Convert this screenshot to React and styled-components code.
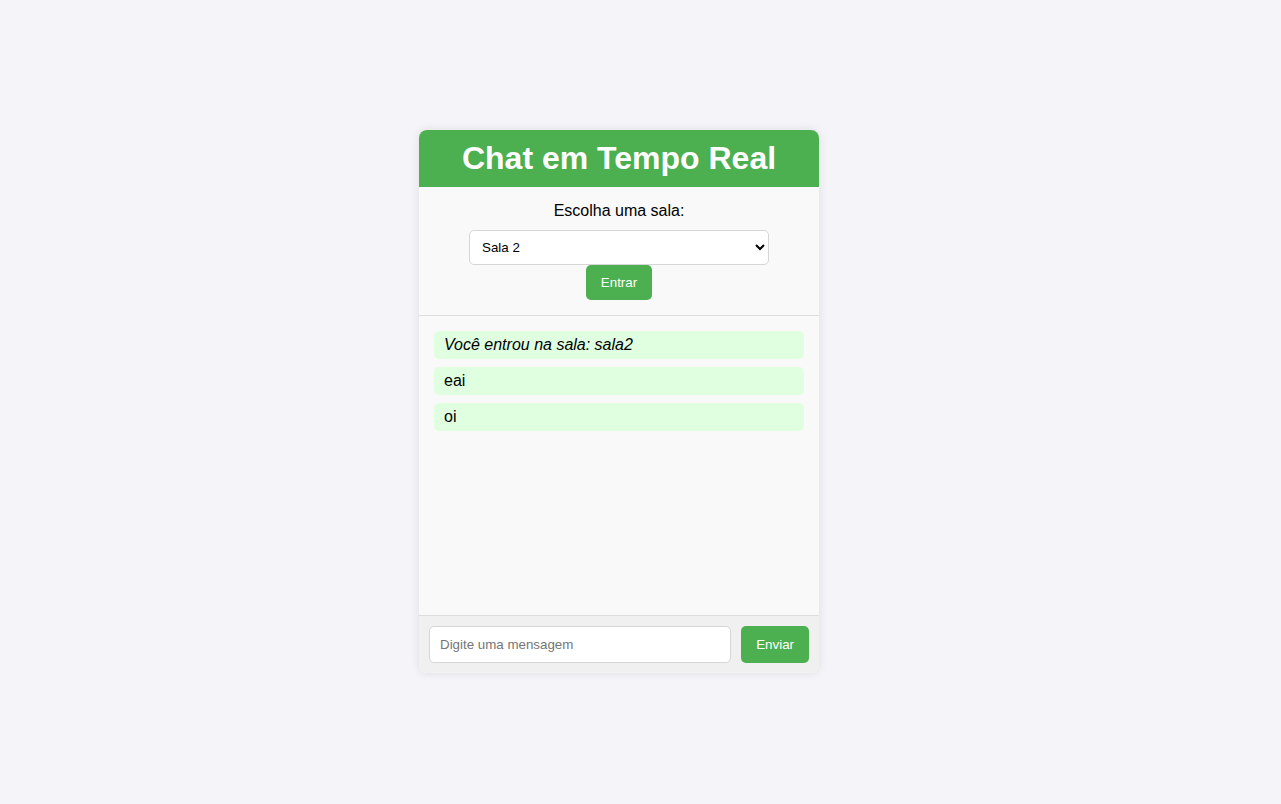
import React, { useState } from 'react';
import styled, { createGlobalStyle } from 'styled-components';

const GlobalStyle = createGlobalStyle`
  html, body {
    margin: 0;
    padding: 0;
  }
  body {
    font-family: Arial, "Liberation Sans", sans-serif;
    background: #f4f4f9;
  }
  * {
    box-sizing: border-box;
  }
`;

const Page = styled.div`
  min-height: 100vh;
  display: flex;
  align-items: center;
  justify-content: center;
  padding-right: 43px;
  padding-bottom: 1px;
`;

const ChatCard = styled.div`
  width: 400px;
  background: #fff;
  border-radius: 8px;
  overflow: hidden;
  box-shadow: 0 0 10px rgba(0, 0, 0, 0.1);
`;

const Title = styled.h1`
  margin: 0;
  padding: 10px;
  background: #4caf50;
  color: #fff;
  font-size: 32px;
  font-weight: bold;
  text-align: center;
  line-height: 37px;
`;

const RoomSection = styled.div`
  padding: 15px;
  background: #f9f9f9;
  border-bottom: 1px solid #ddd;
  display: flex;
  flex-direction: column;
  align-items: center;
`;

const RoomLabel = styled.label`
  font-size: 16px;
  line-height: 18px;
  color: #000;
`;

const RoomSelect = styled.select`
  width: 300px;
  height: 35px;
  margin-top: 10px;
  padding: 0 8px;
  border: 1px solid #d6d6d6;
  border-radius: 5px;
  background: #fff;
  font-family: Arial, "Liberation Sans", sans-serif;
  font-size: 13.33px;
  color: #000;
`;

const GreenButton = styled.button`
  padding: 10px 15px;
  border: none;
  border-radius: 5px;
  background: #4caf50;
  color: #fff;
  font-family: Arial, "Liberation Sans", sans-serif;
  font-size: 13.33px;
  line-height: 15px;
  cursor: pointer;
`;

const Messages = styled.div`
  height: 300px;
  padding: 15px;
  background: #f9f9f9;
  border-bottom: 1px solid #ddd;
  overflow-y: auto;
`;

const Message = styled.div`
  padding: 5px 10px;
  margin-bottom: 8px;
  background: #e0ffe0;
  border-radius: 5px;
  font-size: 16px;
  line-height: 18px;
  color: #000;
  font-style: ${p => (p.$system ? 'italic' : 'normal')};
`;

const Composer = styled.div`
  display: flex;
  gap: 10px;
  padding: 10px;
  background: #f0f0f0;
`;

const MessageInput = styled.input`
  flex: 1;
  padding: 10px;
  border: 1px solid #d6d6d6;
  border-radius: 5px;
  background: #fff;
  font-family: Arial, "Liberation Sans", sans-serif;
  font-size: 13.33px;
  line-height: 15px;

  &::placeholder {
    color: #757575;
  }
`;

export default function App() {
  const [room, setRoom] = useState('sala2');
  const messages = [
    { text: 'Você entrou na sala: sala2', system: true },
    { text: 'eai' },
    { text: 'oi' },
  ];

  return (
    <>
      <GlobalStyle />
      <Page>
        <ChatCard>
          <Title>Chat em Tempo Real</Title>
          <RoomSection>
            <RoomLabel htmlFor="room">Escolha uma sala:</RoomLabel>
            <RoomSelect id="room" value={room} onChange={e => setRoom(e.target.value)}>
              <option value="sala1">Sala 1</option>
              <option value="sala2">Sala 2</option>
              <option value="sala3">Sala 3</option>
            </RoomSelect>
            <GreenButton>Entrar</GreenButton>
          </RoomSection>
          <Messages>
            {messages.map((m, i) => (
              <Message key={i} $system={m.system}>{m.text}</Message>
            ))}
          </Messages>
          <Composer>
            <MessageInput placeholder="Digite uma mensagem" />
            <GreenButton>Enviar</GreenButton>
          </Composer>
        </ChatCard>
      </Page>
    </>
  );
}
